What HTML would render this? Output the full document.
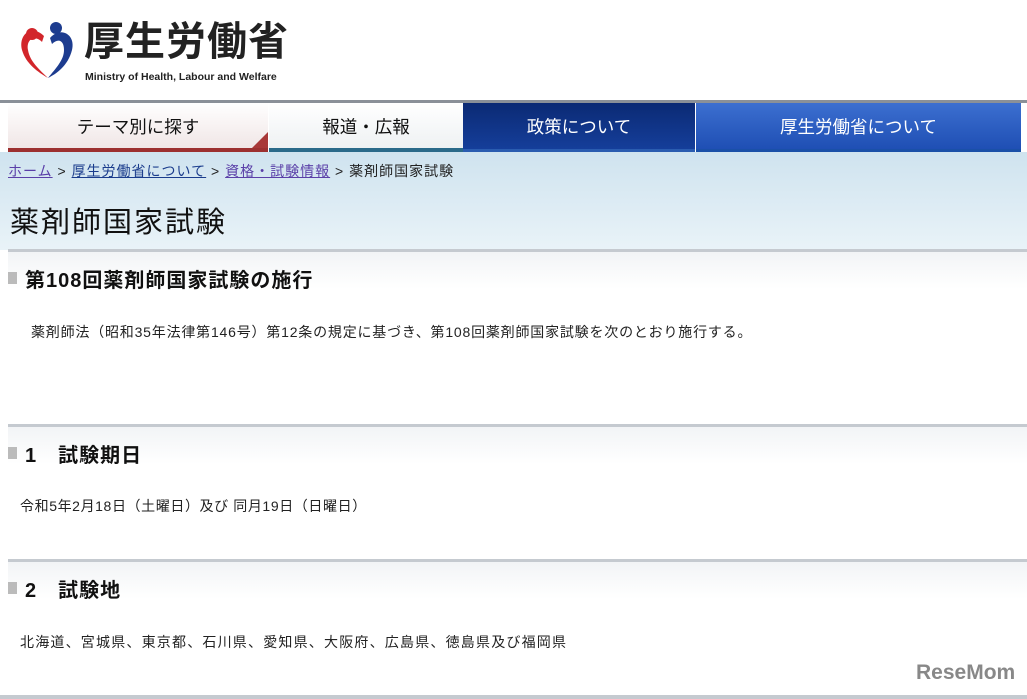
<!DOCTYPE html>
<html><head><meta charset="utf-8"><style>
*{margin:0;padding:0;box-sizing:border-box}
body{width:1027px;height:699px;overflow:hidden;background:#fff;font-family:"Liberation Sans","Noto Sans CJK JP",sans-serif;color:#111;position:relative}
.abs{position:absolute}
.logo-t{left:84px;top:18px;font-size:40px;font-weight:bold;color:#222;letter-spacing:1px;line-height:48px}
.logo-s{left:85px;top:71px;font-size:10.5px;font-weight:bold;color:#222}
.navline{left:0;top:100px;width:1027px;height:3px;background:#8a9098}
.tab{position:absolute;top:103px;height:49px;text-align:center;line-height:48px;font-size:17.5px}
.bc{left:0;top:152px;width:1027px;height:98px;background:linear-gradient(#cfe3ef,#e9f3f8)}
.sec{position:absolute;left:8px;width:1019px;height:40px;border-top:3px solid #c5cad0;background:linear-gradient(#f2f4f6,#fff)}
.sec .sq{position:absolute;left:0;top:20px;width:9px;height:12px;background:#bbb}
.sec h2{position:absolute;left:17px;top:12px;font-size:20px;font-weight:bold;color:#111;letter-spacing:1px}
p{position:absolute;font-size:14px;color:#222;letter-spacing:0.6px}
</style></head><body>
<svg class="abs" style="left:18px;top:20px" width="58" height="62" viewBox="0 0 58 62">
<path d="M26 16 C14 4 0 14 4 30 C8 44 20 52 30 58 C22 50 12 42 10 30 C8 20 16 14 24 22Z" fill="#d2262b"/>
<circle cx="14" cy="14" r="6" fill="#d2262b"/>
<path d="M32 18 C42 6 58 14 54 30 C50 46 38 54 30 58 C38 48 46 40 46 30 C46 20 40 18 34 24Z" fill="#1d3c8f"/>
<circle cx="38" cy="8" r="6" fill="#1d3c8f"/>
</svg>
<div class="abs logo-t">厚生労働省</div>
<div class="abs logo-s">Ministry of Health, Labour and Welfare</div>
<div class="abs navline"></div>
<div class="tab" style="left:8px;width:260px;background:linear-gradient(#fff,#f0e6e6);border-bottom:4px solid #9c3030">テーマ別に探す<div style="position:absolute;right:0;bottom:0;width:0;height:0;border-left:16px solid transparent;border-bottom:16px solid #a83838"></div></div>
<div class="tab" style="left:269px;width:194px;background:linear-gradient(#fff,#eef1f3);border-bottom:4px solid #2a6a8a">報道・広報</div>
<div class="tab" style="left:463px;width:232px;background:linear-gradient(#0b2a74,#153e9a);color:#fff;border-bottom:3px solid #2a5cb0">政策について</div>
<div class="tab" style="left:696px;width:325px;background:linear-gradient(#3c6fd0,#1f4fb4);color:#fff;border-bottom:3px solid #1a50a8">厚生労働省について</div>
<div class="abs bc"></div>
<div class="abs" style="left:8px;top:161px;font-size:14px;color:#222;letter-spacing:1px;white-space:nowrap"><span style="color:#5a3fa8;text-decoration:underline">ホーム</span> &gt; <span style="color:#1a3c8c;text-decoration:underline">厚生労働省について</span> &gt; <span style="color:#5a3fa8;text-decoration:underline">資格・試験情報</span> &gt; 薬剤師国家試験</div>
<div class="abs" style="left:10px;top:199px;font-size:29px;color:#111;letter-spacing:2px">薬剤師国家試験</div>
<div class="sec" style="top:249px"><div class="sq"></div><h2>第108回薬剤師国家試験の施行</h2></div>
<p style="left:31px;top:322px;letter-spacing:0.8px;white-space:nowrap">薬剤師法（昭和35年法律第146号）第12条の規定に基づき、第108回薬剤師国家試験を次のとおり施行する。</p>
<div class="sec" style="top:424px"><div class="sq"></div><h2>1　試験期日</h2></div>
<p style="left:20px;top:496px">令和5年2月18日（土曜日）及び 同月19日（日曜日）</p>
<div class="sec" style="top:559px"><div class="sq"></div><h2>2　試験地</h2></div>
<p style="left:20px;top:632px;letter-spacing:1.2px">北海道、宮城県、東京都、石川県、愛知県、大阪府、広島県、徳島県及び福岡県</p>
<div class="abs" style="left:916px;top:661px;font-size:21px;font-weight:bold;color:#888">ReseMom</div>
<div class="abs" style="left:0;top:695px;width:1027px;height:4px;background:#c5cad0"></div>
</body></html>
